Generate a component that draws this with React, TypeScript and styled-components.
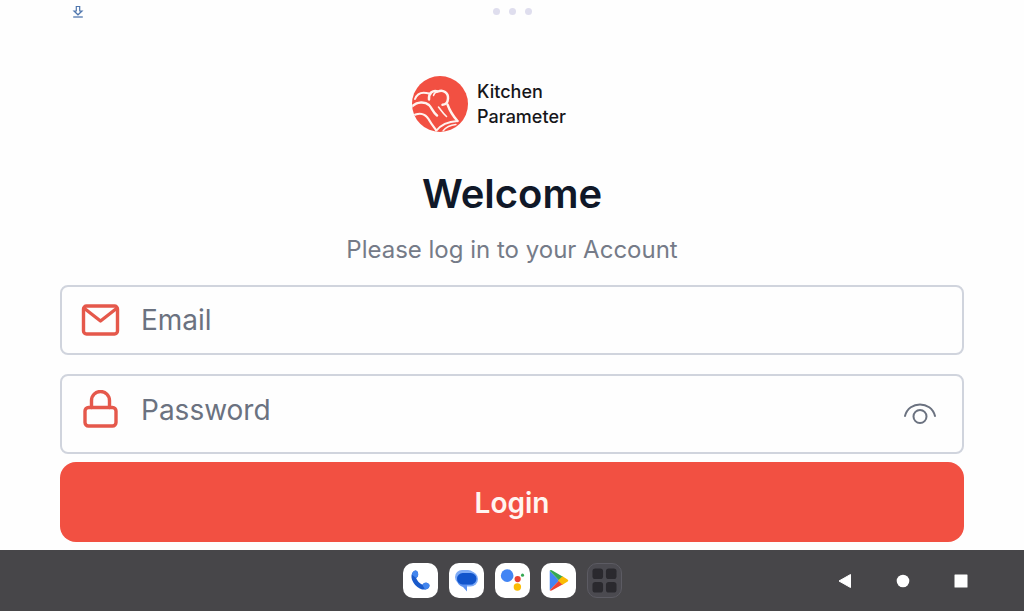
import React, { useState } from "react";
import styled, { createGlobalStyle } from "styled-components";

const GlobalStyle = createGlobalStyle`
  *, *::before, *::after { box-sizing: border-box; }
  body { margin: 0; background: #fefefe; font-family: Inter, "Liberation Sans", sans-serif; }
`;

const Screen = styled.div`
  min-height: 100vh;
  display: flex;
  flex-direction: column;
`;

const StatusBar = styled.header`
  display: grid;
  grid-template-columns: 1fr auto 1fr;
  align-items: center;
  height: 23px;
  padding: 0 72px;
`;

const Dots = styled.div`
  display: flex;
  gap: 9px;
`;

const Dot = styled.span`
  width: 7px;
  height: 7px;
  border-radius: 50%;
  background: #dfdeee;
`;

const Content = styled.main`
  flex: 1;
  display: flex;
  flex-direction: column;
  align-items: center;
  padding: 53px 60px 8px;
`;

const Brand = styled.div`
  display: flex;
  align-items: center;
  gap: 9px;
  margin-right: 46px;
`;

const BrandName = styled.div`
  font-size: 18px;
  line-height: 25px;
  font-weight: 500;
  color: #16161a;
`;

const Title = styled.h1`
  margin: 36px 0 0;
  font-size: 40px;
  line-height: 52px;
  font-weight: 600;
  color: #101828;
`;

const Subtitle = styled.p`
  margin: 14px 0 0;
  font-size: 24px;
  line-height: 32px;
  color: #757b88;
`;

const Form = styled.form`
  width: 100%;
  display: flex;
  flex-direction: column;
  margin-top: 19px;
`;

const Field = styled.label<{ $tall?: boolean }>`
  display: flex;
  align-items: center;
  height: ${(p) => (p.$tall ? 80 : 70)}px;
  margin-bottom: ${(p) => (p.$tall ? 8 : 19)}px;
  padding: 0 24px ${(p) => (p.$tall ? 8 : 0)}px 18px;
  border: 2px solid #d0d4dd;
  border-radius: 8px;
`;

const FieldIcon = styled.svg`
  flex: none;
  width: 40px;
  height: 40px;
  margin-right: 21px;
  fill: none;
  stroke: #e5584b;
  stroke-width: 3.4;
  stroke-linejoin: round;
  stroke-linecap: round;
`;

const Input = styled.input`
  flex: 1;
  min-width: 0;
  padding: 0;
  border: 0;
  outline: 0;
  background: transparent;
  font: 400 28px/40px Inter, "Liberation Sans", sans-serif;
  color: #101828;
  &::placeholder { color: #6b7280; opacity: 1; }
`;

const IconButton = styled.button`
  display: flex;
  padding: 0;
  border: 0;
  background: transparent;
  cursor: pointer;
`;

const RevealButton = styled(IconButton)`
  padding-top: 8px;
`;

const LoginButton = styled.button`
  height: 80px;
  padding: 2px 0 0;
  border: 0;
  border-radius: 16px;
  background: #f25042;
  color: #fff5f1;
  font: 600 28px/40px Inter, "Liberation Sans", sans-serif;
  cursor: pointer;
`;

const TaskBar = styled.footer`
  display: grid;
  grid-template-columns: 1fr auto 1fr;
  align-items: center;
  height: 61px;
  background: #474649;
`;

const Apps = styled.nav`
  grid-column: 2;
  display: flex;
  gap: 11px;
`;

const AppButton = styled.button<{ $dark?: boolean }>`
  width: 35px;
  height: 35px;
  padding: 0;
  border: ${(p) => (p.$dark ? "1px solid #5c5b63" : "0")};
  border-radius: 10px;
  background: ${(p) => (p.$dark ? "#4b4a50" : "#ffffff")};
  display: grid;
  place-items: center;
  cursor: pointer;
`;

const SystemNav = styled.nav`
  display: flex;
  justify-content: flex-end;
  gap: 38px;
  padding-right: 53px;
`;

const NavButton = styled(IconButton)`
  width: 20px;
  height: 20px;
`;

const BrandMark = () => (
  <svg width="56" height="56" viewBox="0 0 56 56" aria-hidden="true">
    <defs>
      <clipPath id="mark"><circle cx="28" cy="28" r="28" /></clipPath>
    </defs>
    <circle cx="28" cy="28" r="28" fill="#f25042" />
    <g clipPath="url(#mark)" fill="none" stroke="#fff3ef" strokeWidth="2" strokeLinecap="round" strokeLinejoin="round">
      <path d="M3 23C5 17.500 10 15.500 17 17.500" />
      <path d="M17 23.500C16.500 17 21 13.500 26 15.500C31 13 36.500 17 36 22.500C35.800 26 34 28.500 30.500 28.800" strokeWidth="2.500" />
      <path d="M26 15.500C23.500 16 22 17.500 21.500 19.500" strokeWidth="1.400" />
      <path d="M0 30.500C5 25.500 13 25.500 17 29C20 32 20.500 36 25 39.500" strokeWidth="2.400" />
      <path d="M1 39.500C7 36.500 13 37.500 16.500 43C19 47.500 21 50 24 54" strokeWidth="2.200" />
      <path d="M35.500 28.500C37.500 34 41 40 45.500 45" strokeWidth="2.400" />
      <path d="M45.500 45C36 45.500 29 48.500 24 55" strokeWidth="2" />
      <path d="M44 48.500C38 49 34 51 31 55" strokeWidth="1.300" />
      <path d="M26.500 31C29 34 31 37.500 34.500 40.500" strokeWidth="1.600" />
    </g>
  </svg>
);

export default function App() {
  const [visible, setVisible] = useState(false);
  return (
    <Screen>
      <GlobalStyle />
      <StatusBar>
        <svg width="12" height="14" viewBox="0 0 12 14" fill="none" stroke="#4f76ad" strokeWidth="1.2" aria-hidden="true">
          <path d="M4.300 1.500H7.700V6H10L6 9.800L2 6H4.300Z" />
          <path d="M1.200 12H10.800" strokeWidth="1.300" />
        </svg>
        <Dots><Dot /><Dot /><Dot /></Dots>
      </StatusBar>

      <Content>
        <Brand>
          <BrandMark />
          <BrandName>Kitchen<br />Parameter</BrandName>
        </Brand>
        <Title>Welcome</Title>
        <Subtitle>Please log in to your Account</Subtitle>
        <Form onSubmit={(e) => e.preventDefault()}>
          <Field>
            <FieldIcon viewBox="0 0 40 40" aria-hidden="true">
              <rect x="3.500" y="6" width="34" height="28" rx="3" />
              <path d="M4.500 8.500L20.500 21L36.500 8.500" />
            </FieldIcon>
            <Input type="email" placeholder="Email" aria-label="Email" />
          </Field>
          <Field $tall>
            <FieldIcon viewBox="0 0 40 40" aria-hidden="true">
              <rect x="5" y="17.500" width="31" height="18.500" rx="3.500" />
              <path d="M11.500 17.500V10.500A9 9 0 0 1 29.500 10.500V17.500" />
            </FieldIcon>
            <Input type={visible ? "text" : "password"} placeholder="Password" aria-label="Password" />
            <RevealButton type="button" aria-label="Show password" onClick={() => setVisible(!visible)}>
              <svg width="36" height="24" viewBox="0 0 36 24" fill="none" stroke="#6b7280" strokeWidth="2" strokeLinecap="round">
                <path d="M3 14C7 -1.500 29 -1.500 33 14" />
                <circle cx="18" cy="14.500" r="6.500" />
              </svg>
            </RevealButton>
          </Field>
          <LoginButton type="submit">Login</LoginButton>
        </Form>
      </Content>

      <TaskBar>
        <Apps>
          <AppButton aria-label="Phone">
            <svg width="35" height="35" viewBox="0 0 36 36">
              <path d="M11 8.500C13 7 15 8 15.500 10.500C16 13 15 14.500 13.500 15.500C14.500 18.500 17 21 20 22.300C21.500 20.300 23.500 20 25.500 20.800C28 22 27.500 24.500 26 26C23 28.500 17 27.500 12.500 22.500C8 17.500 7.500 11.500 11 8.500Z" fill="#1a5acb" />
              <path d="M11 8.500C13 7 15 8 15.500 10.500C16 13 15 14.500 13.500 15.500L9.300 12Q9.500 9.500 11 8.500Z" fill="#4386ee" />
              <path d="M20 22.300C21.500 20.300 23.500 20 25.500 20.800C28 22 27.500 24.500 26 26Q24.500 27.200 22.500 27.200Z" fill="#4386ee" />
            </svg>
          </AppButton>
          <AppButton aria-label="Messages">
            <svg width="35" height="35" viewBox="0 0 35 35">
              <rect x="6" y="7" width="20" height="14" rx="7" fill="#7eabf6" />
              <rect x="10" y="8.500" width="19" height="15" rx="7.500" fill="#7eabf6" />
              <path d="M8 16C8 21 11 23 14 24L18 28.500V22H24V14H8Z" fill="#5a90f0" />
              <rect x="8" y="10" width="19.500" height="11.500" rx="5.700" fill="#1255cc" />
            </svg>
          </AppButton>
          <AppButton aria-label="Assistant">
            <svg width="35" height="35" viewBox="0 0 36 36">
              <circle cx="12.500" cy="13" r="6.500" fill="#4285f4" />
              <circle cx="23.300" cy="16.500" r="3.200" fill="#e94335" />
              <circle cx="23" cy="24.700" r="3.800" fill="#fbbc04" />
              <circle cx="28.300" cy="12.500" r="1.600" fill="#34a853" />
            </svg>
          </AppButton>
          <AppButton aria-label="Play Store">
            <svg width="35" height="35" viewBox="0 0 36 36">
              <path d="M9 8V28L18.500 18Z" fill="#4285f4" />
              <path d="M9 8Q10 6.500 12 8L23 14.300L18.500 18Z" fill="#34a853" />
              <path d="M9 28Q10 29 12 27.700L23 21.700L18.500 18Z" fill="#ea4335" />
              <path d="M22 13.700L27 16.700Q29 18 27 19.300L22 22.300L17.500 18Z" fill="#fbbc04" />
            </svg>
          </AppButton>
          <AppButton $dark aria-label="All apps">
            <svg width="25" height="25" viewBox="0 0 26 26" fill="#2a292e">
              <rect x="0.500" y="0.500" width="11" height="11" rx="3" />
              <rect x="14.500" y="0.500" width="11" height="11" rx="3" />
              <rect x="0.500" y="14.500" width="11" height="11" rx="3" />
              <rect x="14.500" y="14.500" width="11" height="11" rx="3" />
            </svg>
          </AppButton>
        </Apps>
        <SystemNav>
          <NavButton aria-label="Back">
            <svg width="20" height="20" viewBox="0 0 20 20"><path d="M4 10L15.500 3.500V16.500Z" fill="#fff" stroke="#fff" strokeLinejoin="round" /></svg>
          </NavButton>
          <NavButton aria-label="Home">
            <svg width="20" height="20" viewBox="0 0 20 20"><circle cx="10" cy="10" r="6.300" fill="#fff" /></svg>
          </NavButton>
          <NavButton aria-label="Recent apps">
            <svg width="20" height="20" viewBox="0 0 20 20"><rect x="3.500" y="3.500" width="13" height="13" rx="0.500" fill="#fff" /></svg>
          </NavButton>
        </SystemNav>
      </TaskBar>
    </Screen>
  );
}
